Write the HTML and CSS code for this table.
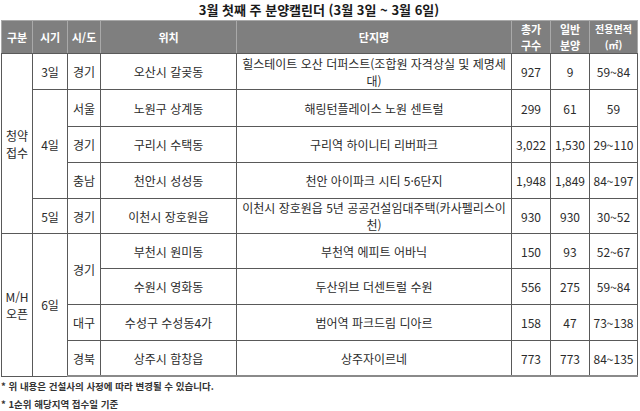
FILE: index.html
```html
<!DOCTYPE html>
<html lang="ko">
<head>
<meta charset="utf-8">
<link rel="stylesheet" href="styles.css">
</head>
<body>
<div class="page">
  <h1 class="title">3월 첫째 주 분양캘린더 (3월 3일 ~ 3월 6일)</h1>
  <table class="cal">
    <colgroup>
      <col class="c1"><col class="c2"><col class="c3"><col class="c4">
      <col class="c5"><col class="c6"><col class="c7"><col class="c8">
    </colgroup>
    <thead>
      <tr>
        <th>구분</th><th>시기</th><th>시/도</th><th>위치</th><th>단지명</th>
        <th>총가<br>구수</th><th>일반<br>분양</th><th class="sm">전용면적<br>(㎡)</th>
      </tr>
    </thead>
    <tbody>
      <tr class="r1">
        <td rowspan="5">청약<br>접수</td>
        <td>3일</td><td>경기</td><td>오산시 갈곶동</td>
        <td>힐스테이트 오산 더퍼스트(조합원 자격상실 및 제명세<br>대)</td>
        <td>927</td><td>9</td><td>59~84</td>
      </tr>
      <tr class="r2">
        <td rowspan="3">4일</td><td>서울</td><td>노원구 상계동</td>
        <td>해링턴플레이스 노원 센트럴</td>
        <td>299</td><td>61</td><td>59</td>
      </tr>
      <tr class="r3">
        <td>경기</td><td>구리시 수택동</td>
        <td>구리역 하이니티 리버파크</td>
        <td>3,022</td><td>1,530</td><td>29~110</td>
      </tr>
      <tr class="r4">
        <td>충남</td><td>천안시 성성동</td>
        <td>천안 아이파크 시티 5·6단지</td>
        <td>1,948</td><td>1,849</td><td>84~197</td>
      </tr>
      <tr class="r5">
        <td>5일</td><td>경기</td><td>이천시 장호원읍</td>
        <td>이천시 장호원읍 5년 공공건설임대주택(카사펠리스이<br>천)</td>
        <td>930</td><td>930</td><td>30~52</td>
      </tr>
      <tr class="r6">
        <td rowspan="4">M/H<br>오픈</td>
        <td rowspan="4">6일</td><td rowspan="2">경기</td><td>부천시 원미동</td>
        <td>부천역 에피트 어바닉</td>
        <td>150</td><td>93</td><td>52~67</td>
      </tr>
      <tr class="r7">
        <td>수원시 영화동</td>
        <td>두산위브 더센트럴 수원</td>
        <td>556</td><td>275</td><td>59~84</td>
      </tr>
      <tr class="r8">
        <td>대구</td><td>수성구 수성동4가</td>
        <td>범어역 파크드림 디아르</td>
        <td>158</td><td>47</td><td>73~138</td>
      </tr>
      <tr class="r9">
        <td>경북</td><td>상주시 함창읍</td>
        <td>상주자이르네</td>
        <td>773</td><td>773</td><td>84~135</td>
      </tr>
    </tbody>
  </table>
  <p class="note note1">* 위 내용은 건설사의 사정에 따라 변경될 수 있습니다.</p>
  <p class="note note2">* 1순위 해당지역 접수일 기준</p>
</div>
</body>
</html>
```

FILE: styles.css
```css
html, body {
  margin: 0;
  padding: 0;
  background: #ffffff;
}
body {
  font-family: "Noto Sans CJK KR", "Noto Sans", sans-serif;
  color: #2b2b2b;
}
.page {
  width: 640px;
  padding-left: 1px;
}
.title {
  margin: 0;
  height: 20px;
  line-height: 20px;
  font-size: 13px;
  font-weight: 700;
  text-align: center;
  color: #1a1a1a;
  width: 636px;
}
.cal {
  border-collapse: collapse;
  table-layout: fixed;
  width: 636px;
  font-size: 12px;
  line-height: 17px;
}
.c1 { width: 31px; }
.c2 { width: 35px; }
.c3 { width: 33px; }
.c4 { width: 136px; }
.c5 { width: 275px; }
.c6 { width: 39px; }
.c7 { width: 39px; }
.c8 { width: 48px; }
.cal th {
  background: #7f7f7f;
  color: #ffffff;
  font-weight: 700;
  font-size: 11px;
  line-height: 16px;
  height: 32px;
  padding: 0;
  border: 1px solid #a9a9a9;
  border-bottom: 1px solid #5a5a5a;
  text-align: center;
}
.cal th.sm {
  font-size: 10px;
}
.cal td {
  border: 1px solid #595959;
  padding: 0;
  text-align: center;
  vertical-align: middle;
}
.cal tr.r1 td { height: 35px; }
.cal tr.r2 td { height: 36px; }
.cal tr.r3 td { height: 35px; }
.cal tr.r4 td { height: 35px; }
.cal tr.r5 td { height: 34px; }
.cal tr.r6 td { height: 34px; }
.cal tr.r7 td { height: 35px; }
.cal tr.r8 td { height: 35px; }
.cal tr.r9 td { height: 34px; }
.cal tbody tr:last-child td {
  border-bottom: 2px solid #8a8a8a;
}
.note {
  margin: 0;
  font-size: 9.5px;
  font-weight: 700;
  color: #333333;
  line-height: 18px;
  height: 18px;
}
.note1 { margin-top: 0; }
```
